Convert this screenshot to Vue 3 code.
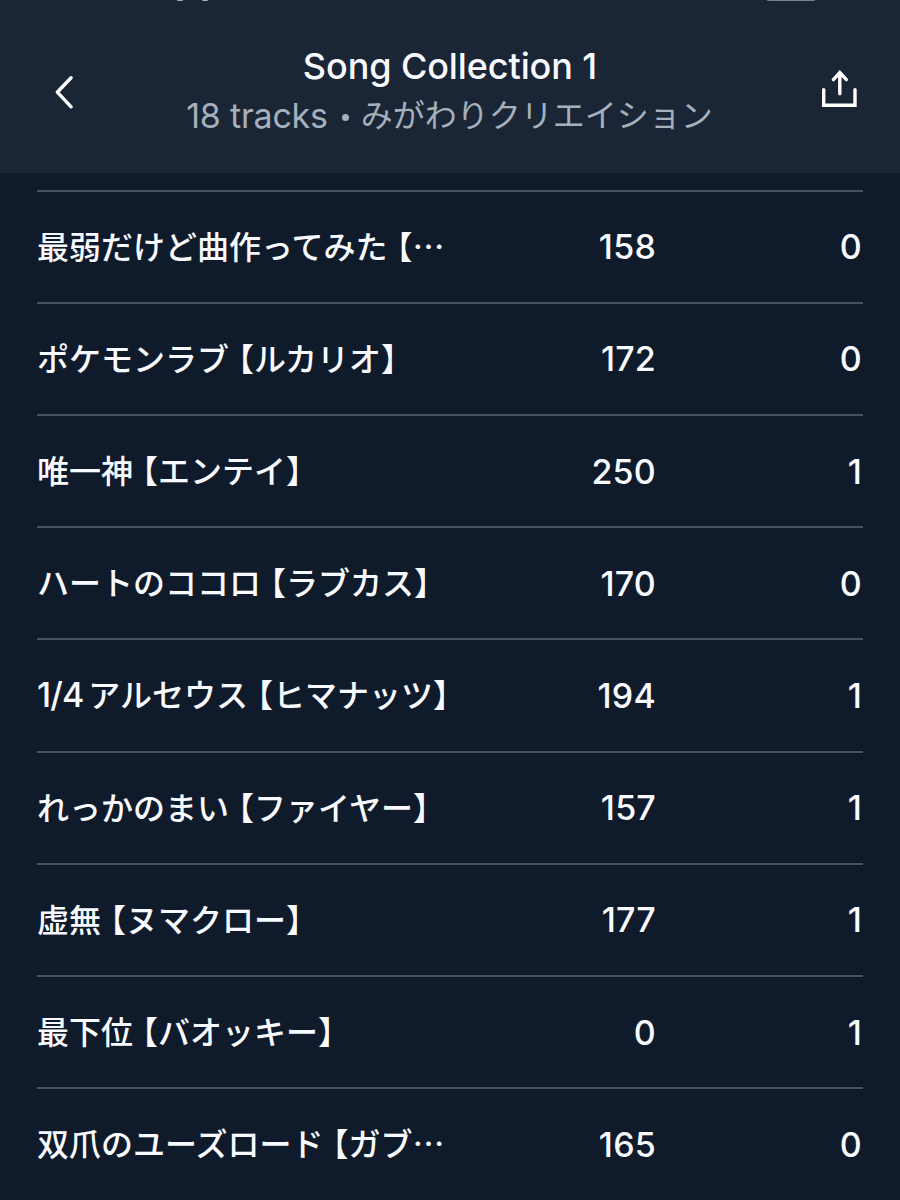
<template>
  <div class="screen">
    <div class="status-bar">
      <i class="clock-dot"></i>
      <i class="clock-dot second"></i>
      <i class="battery"></i>
    </div>
    <header class="header">
      <button class="icon-btn back" aria-label="Back">
        <svg width="24" height="40" viewBox="0 0 24 40">
          <path d="M18.1 5.8 4.3 20.2 18.1 34.8" />
        </svg>
      </button>
      <div class="heading">
        <h1>Song Collection 1</h1>
        <p><span class="count">18 tracks</span><span class="dot"></span><span class="artist">みがわりクリエイション</span></p>
      </div>
      <button class="icon-btn share" aria-label="Share">
        <svg width="40" height="40" viewBox="0 0 40 40">
          <path d="M20.8 24.8V3.6M14.4 10.6 20.8 3.6 27.4 10.6M4.7 20.6V36.2H36V20.6" />
        </svg>
      </button>
    </header>
    <ul class="track-list">
      <li v-for="track in tracks" :key="track.name" class="track">
        <div class="name">
          <span v-for="(part, idx) in splitName(track.name)" :key="idx" :class="part.type">{{ part.text }}</span>
        </div>
        <div class="num">{{ track.plays }}</div>
        <div class="num">{{ track.saves }}</div>
      </li>
    </ul>
  </div>
</template>

<script setup>
import { ref } from 'vue'

const tracks = ref([
  { name: '最弱だけど曲作ってみた【…', plays: 158, saves: 0 },
  { name: 'ポケモンラブ【ルカリオ】', plays: 172, saves: 0 },
  { name: '唯一神【エンテイ】', plays: 250, saves: 1 },
  { name: 'ハートのココロ【ラブカス】', plays: 170, saves: 0 },
  { name: '1/4アルセウス【ヒマナッツ】', plays: 194, saves: 1 },
  { name: 'れっかのまい【ファイヤー】', plays: 157, saves: 1 },
  { name: '虚無【ヌマクロー】', plays: 177, saves: 1 },
  { name: '最下位【バオッキー】', plays: 0, saves: 1 },
  { name: '双爪のユーズロード【ガブ…', plays: 165, saves: 0 }
])

// Brackets and latin text need different spacing than the kana around them
function splitName(name) {
  return name.match(/【|…|[0-9/]+|[^【…0-9/]+/g).map((text) => {
    let type = 'kana'
    if (text === '【') type = 'bracket'
    else if (text === '…') type = 'ellipsis'
    else if (/^[0-9/]+$/.test(text)) type = 'latin'
    return { text, type }
  })
}
</script>

<style>
body {
  margin: 0;
  background: #0f1b2a;
}
</style>

<style scoped>
.screen {
  position: relative;
  height: 1200px;
  overflow: hidden;
  background: #0f1b2a;
  color: #f8faff;
  font-family: Inter, "Noto Sans CJK JP", sans-serif;
}
.status-bar i {
  position: absolute;
  top: -5px;
  left: 176px;
  width: 8px;
  height: 6px;
  border-radius: 4px;
  background: #aab3bd;
}
.status-bar .second {
  left: 201px;
}
.status-bar .battery {
  left: 766px;
  width: 50px;
  border-radius: 6px;
  background: #77818c;
}
.header {
  display: grid;
  grid-template-columns: 110px 1fr 110px;
  box-sizing: border-box;
  height: 173px;
  background: #1a2636;
}
.icon-btn {
  align-self: start;
  padding: 0;
  border: none;
  background: none;
  line-height: 0;
}
.back {
  justify-self: start;
  margin: 72px 0 0 53px;
}
.share {
  justify-self: end;
  margin: 69px 41px 0 0;
}
.icon-btn path {
  fill: none;
  stroke: #fff;
  stroke-width: 3.4;
  stroke-linecap: round;
}
.back path {
  stroke-linejoin: round;
}
.heading {
  padding-top: 41px;
  text-align: center;
  white-space: nowrap;
}
h1 {
  margin: 0;
  font-size: 36px;
  font-weight: 500;
  line-height: 50px;
  letter-spacing: -0.1px;
}
p {
  display: flex;
  justify-content: center;
  align-items: center;
  margin: 0;
  font-size: 34px;
  line-height: 50px;
  color: #a6b0bd;
}
.count {
  letter-spacing: -0.2px;
}
.dot {
  width: 7px;
  height: 7px;
  margin: 3px 12px 0 14px;
  border-radius: 50%;
  background: #a6b0bd;
}
.artist {
  margin: -6px 1px 0 0;
  font-family: "Noto Sans CJK JP", sans-serif;
  font-size: 32px;
}
.track-list {
  margin: 0;
  padding: 16.6px 37px 0;
  list-style: none;
}
.track {
  display: grid;
  grid-template-columns: 1fr 180px 206px;
  align-items: center;
  box-sizing: border-box;
  height: 112.2px;
  border-top: 2px solid #465261;
}
.name {
  display: flex;
  align-items: center;
  margin-top: -4px;
  font-family: "Noto Sans CJK JP", sans-serif;
  font-size: 32px;
  font-weight: 500;
  line-height: 48px;
  white-space: nowrap;
}
.bracket {
  margin-left: 9px;
  font-feature-settings: "halt";
}
.latin {
  margin: 3px 5px 0 0;
  font-family: Inter, sans-serif;
  font-size: 34px;
  letter-spacing: -0.9px;
}
.num {
  padding: 1px 1px 0 0;
  font-size: 34px;
  font-weight: 500;
  line-height: 48px;
  letter-spacing: 0.2px;
  text-align: right;
}
</style>
